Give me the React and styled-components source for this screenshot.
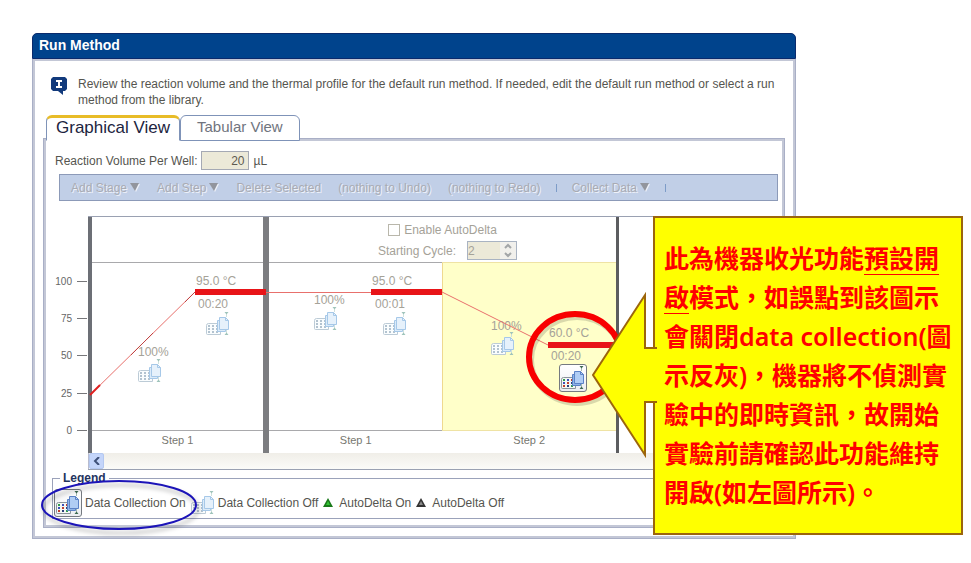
import React, { useState } from 'react';
import styled, { createGlobalStyle, css } from 'styled-components';

const GlobalStyle = createGlobalStyle`
    * {
        box-sizing: border-box;
    }

    body {
        margin: 0;
        background: #fff;
        color: #55554f;
        font-family: "Liberation Sans", Arial, sans-serif;
        font-size: 12px;
        line-height: 16px;
    }

    button, input {
        margin: 0;
        padding: 0;
        font: inherit;
    }
`;

const Page = styled.main`
    position: relative;
    padding: 33px 175px 24px 32px;
`;

const TitleBar = styled.h1`
    height: 26px;
    margin: 0;
    padding: 0 6px;
    border: 1px solid #0a2a6c;
    border-radius: 5px 5px 0 0;
    background: #00438c;
    color: #fff;
    font-size: 14px;
    line-height: 22px;
`;

// double tone frame shared by the window and the tab panel
const frame = css`
    border: 1px solid #a9afc6;
    box-shadow: inset 0 0 0 2px #c3c7d6;
`;

const WindowBody = styled.section`
    ${frame}
    border-top: 0;
    padding: 0 10px 10px;
`;

const Intro = styled.div`
    display: flex;
    gap: 11px;
    padding: 17px 9px 7px 8px;

    p {
        margin: 0;
    }

    svg {
        flex: none;
        margin-top: 1px;
    }
`;

const TabList = styled.div`
    position: relative;
    z-index: 1;
    display: flex;
    margin: 0 0 -3px 3px;
`;

const Tab = styled.button`
    height: 26px;
    padding: 0 ${props => (props.$active ? 9 : 16)}px 2px;
    border: 1px solid #7f93b8;
    border-radius: 6px 6px 0 0;
    background: #fff;
    color: #70747e;
    font-size: 15px;
    line-height: 18px;

    ${props => props.$active && css`
        border-bottom-color: #fff;
        border-top: 3px solid #e8bc28;
        color: #1c2440;
        font-size: 17px;
    `}
`;

const TabPanel = styled.div`
    ${frame}
    padding: 12px 6px 8px 11px;
`;

const VolumeRow = styled.div`
    display: flex;
    align-items: center;
    gap: 3px;
    height: 19px;
    margin-bottom: 4px;

    span {
        margin-left: 2px;
    }
`;

const VolumeInput = styled.input`
    width: 48px;
    height: 19px;
    padding-right: 3px;
    border: 1px solid #a5a9b4;
    background: #ece9d8;
    color: #5d5a50;
    text-align: right;
`;

const Toolbar = styled.div`
    display: flex;
    align-items: center;
    gap: 13px;
    height: 27px;
    margin: 0 0 15px 4px;
    padding: 0 9px;
    border: 1px solid #8c9ab8;
    background: #c1cfe7;
    overflow: hidden;
`;

const ToolButton = styled.button`
    display: flex;
    align-items: center;
    gap: 3px;
    padding: 0 2px;
    border: 0;
    background: none;
    color: #a9abb3;
    text-shadow: 1px 1px 0 #eef2fa;
    white-space: nowrap;
`;

const Divider = styled.span`
    width: 1px;
    height: 8px;
    background: #7d9cc8;
`;

const ChartRow = styled.div`
    display: flex;
`;

const Axis = styled.svg`
    flex: none;
    width: 33px;
    height: 237px;
    font-size: 10px;
    fill: #666;
`;

const ChartFrame = styled.div`
    flex: 1;
    min-width: 0;
    border: 1px solid #9aa1b2;
    border-width: 1px 0 1px 0;
`;

const Plot = styled.div`
    position: relative;
    display: grid;
    grid-template-columns: 175px 353px 1fr;
    overflow: hidden;
`;

const Stage = styled.div`
    display: grid;
    grid-template-rows: 46px 168px 22px;
    border-left: ${props => props.$rule}px solid ${props => props.$tone || '#7c7d80'};
`;

const StageHeader = styled.div`
    display: flex;
    flex-direction: column;
    align-items: center;
    gap: 2px;
    padding-top: 3px;
    border-bottom: 1px solid #a9a9ac;
    color: #a5a298;
`;

const Steps = styled.div`
    display: flex;
    border-bottom: 1px solid #a9a9ac;
`;

const Step = styled.div`
    flex: 1;

    ${props => props.$selected && css`
        border-left: 1px solid #efd98f;
        background: #ffffc9;
        box-shadow: 0 1px 0 #efe3a4, 0 -1px 0 #efe3a4;
    `}
`;

const StepNames = styled.div`
    display: flex;
    color: #77776f;
    font-size: 11px;
    line-height: 18px;
    text-align: center;

    span {
        flex: 1;
    }
`;

const CheckLine = styled.label`
    display: flex;
    align-items: center;
    gap: 4px;
    height: 19px;
`;

const CheckBox = styled.input`
    appearance: none;
    width: 12px;
    height: 12px;
    border: 1px solid #b9b7ab;
    background: #fff;
`;

const CycleLine = styled.div`
    display: flex;
    align-items: center;
    gap: 11px;
    height: 19px;
    padding-left: 10px;
`;

const Spinner = styled.span`
    display: flex;
    width: 50px;
    height: 19px;
    border: 1px solid #a9b3c2;
    background: #f1f0ec;

    input {
        width: 32px;
        border: 0;
        background: #ece9d8;
        color: #a5a298;
    }
`;

const SpinnerButtons = styled.span`
    display: flex;
    flex: 1;
    flex-direction: column;

    button {
        display: flex;
        flex: 1;
        align-items: center;
        justify-content: center;
        border: 0;
        background: none;
    }
`;

// drawn over the stage columns, the ramp lines run across them
const Profile = styled.svg`
    position: absolute;
    top: 0;
    left: 0;
    width: 560px;
    height: 236px;
    fill: #a5a298;
    pointer-events: none;
`;

const CollectButton = styled.button`
    position: absolute;
    left: ${props => props.$x}px;
    top: ${props => props.$y}px;
    display: flex;
    border: 0;
    background: none;
`;

const IconFrame = styled.span`
    display: flex;
    padding: 1px;
    border: 1px solid #757a80;
    border-radius: 3px;
    background: linear-gradient(#fff, #eceef1);
`;

const ScrollBar = styled.div`
    display: flex;
    height: 16px;
    border-left: 1px solid #b9bccf;
    background: linear-gradient(#f0eee8, #fbfbf8);

    button {
        display: flex;
        align-items: center;
        justify-content: center;
        width: 15px;
        border: 1px solid #b4c8f0;
        border-radius: 2px;
        background: #c4d5fa;
    }
`;

const Legend = styled.fieldset`
    position: relative;
    display: flex;
    align-items: center;
    min-width: 0;
    height: 49px;
    margin: 0 0 0 -3px;
    padding: 1px 1px 0;
    border: 1px solid #9ba2ba;

    legend {
        margin-left: 6px;
        padding: 0 3px;
        color: #24345e;
        font-size: 12px;
        font-weight: bold;
    }
`;

const LegendItem = styled.span`
    display: flex;
    align-items: center;
    gap: ${props => props.$gap || 3}px;
    margin-right: 5px;
    white-space: nowrap;
`;

const LegendMark = styled.svg`
    position: absolute;
    left: -14px;
    top: -7px;
    overflow: visible;
    filter: drop-shadow(2px 4px 2px rgba(0, 0, 0, 0.3));
    pointer-events: none;
`;

const Callout = styled.aside`
    position: absolute;
    top: 216px;
    right: 8px;
    width: 310px;
    padding: 21px 9px;
    border: 2px solid #9c650c;
    background: #ff0;
    color: #f00;
    font-family: "Noto Sans", "Noto Sans CJK TC", sans-serif;
    font-size: 25px;
    font-weight: 600;
    line-height: 39px;

    p {
        margin: 0;
    }

    u {
        text-decoration-thickness: 1px;
        text-underline-offset: 6px;
    }
`;

const CalloutArrow = styled.svg`
    position: absolute;
    top: 73px;
    left: -64px;
`;

const CollectIcon = ({ on }) => {
    const line = on ? '#5b82c6' : '#a6c8e8';
    const pad = on ? '#8a949a' : '#bccbd6';
    const dots = on ? ['#2f9a4c', '#3a50b8', '#c0402e', '#2b3f7a'] : ['#b3c3d0'];
    return (
        <svg width="24" height="24" viewBox="0 0 24 24" fill="none">
            <path d="M2.500 11.500h12v11h-13a1 1 0 0 1-1-1v-8a2 2 0 0 1 2-2z" fill={on ? '#f4f7f4' : '#fafdfe'} stroke={pad} />
            {[2, 6, 10].map((x, i) =>
                [13, 16, 19].map((y, j) => (
                    <rect key={`${x}_${y}`} x={x} y={y} width="2" height="2" fill={dots[(i + j) % dots.length]} />
                ))
            )}
            <path d="M11.500 8.500h8v11h-8z" fill={on ? '#8fb4e6' : '#dcebf8'} stroke={line} />
            <path d="M13.500 5.500h6l3 3v9h-9z" fill={on ? '#b0cdf4' : '#e6f1fb'} stroke={line} />
            <path d="M19.500 5.500v3h3" stroke={line} />
            <path d="M20.500 2v3M20.500 18v3" stroke={on ? '#a3bbb1' : '#cfe1dd'} />
            <path d="M18.500 0h4l-2 2.500zM18.500 23h4l-2-2.500z" fill={on ? '#3d6a52' : '#9fc4bb'} />
        </svg>
    );
};

const InfoIcon = () => (
    <svg width="16" height="18" viewBox="0 0 16 18">
        <path d="M2 0h12l2 2v10l-2 2h-2v4l-5-4H2l-2-2V2z" fill="#123a7c" />
        <path d="M5 3h6v2H9v4h2v2H5V9h2V5H5z" fill="#fff" />
    </svg>
);

const DownArrow = () => (
    <svg width="10" height="9" viewBox="0 0 10 9">
        <path d="M1 1h9L6 9z" fill="#eef2fa" />
        <path d="M0 0h9L5 8z" fill="#92959d" />
    </svg>
);

const DeltaIcon = ({ color, edge }) => (
    <svg width="10" height="10" viewBox="0 0 10 10">
        <path d="M5 0l5 9H0z" fill={edge} />
        <path d="M5 3l2 4H3z" fill={color} />
    </svg>
);

const Chevron = ({ d, color = '#a3a6a8' }) => (
    <svg width="8" height="8" viewBox="0 0 8 8" fill="none">
        <path d={d} stroke={color} strokeWidth="2" />
    </svg>
);

const ticks = [
    { value: 100, y: 65 },
    { value: 75, y: 102 },
    { value: 50, y: 139 },
    { value: 25, y: 177 },
    { value: 0, y: 214 },
];

const readings = [
    { x: 108, y: 68, text: '95.0 °C' },
    { x: 110, y: 91, text: '00:20' },
    { x: 50, y: 139, text: '100%' },
    { x: 226, y: 87, text: '100%' },
    { x: 284, y: 68, text: '95.0 °C' },
    { x: 287, y: 91, text: '00:01' },
    { x: 403, y: 113, text: '100%' },
    { x: 461, y: 120, text: '60.0 °C' },
    { x: 463, y: 143, text: '00:20' },
];

const collectPoints = [
    { x: 50, y: 142 },
    { x: 118, y: 95 },
    { x: 226, y: 90 },
    { x: 295, y: 95 },
    { x: 403, y: 115 },
    { x: 471, y: 147, on: true },
];

const Chart = () => (
    <ChartRow>
        <Axis>
            {ticks.map(t => (
                <g key={t.value}>
                    <text x="17" y={t.y + 4} textAnchor="end">{t.value}</text>
                    <path d={`M22 ${t.y + 0.5}h10`} stroke="#77777a" />
                </g>
            ))}
        </Axis>
        <ChartFrame>
            <Plot>
                <Stage $rule={4} $tone="#6c6f76">
                    <StageHeader />
                    <Steps><Step /></Steps>
                    <StepNames><span>Step 1</span></StepNames>
                </Stage>
                <Stage $rule={6}>
                    <StageHeader>
                        <CheckLine>
                            <CheckBox type="checkbox" disabled />
                            Enable AutoDelta
                        </CheckLine>
                        <CycleLine>
                            <label htmlFor="cycle">Starting Cycle:</label>
                            <Spinner>
                                <input id="cycle" defaultValue="2" disabled />
                                <SpinnerButtons>
                                    <button type="button" aria-label="Increase" disabled><Chevron d="M1 6l3-3 3 3" /></button>
                                    <button type="button" aria-label="Decrease" disabled><Chevron d="M1 2l3 3 3-3" /></button>
                                </SpinnerButtons>
                            </Spinner>
                        </CycleLine>
                    </StageHeader>
                    <Steps>
                        <Step />
                        <Step $selected />
                    </Steps>
                    <StepNames><span>Step 1</span><span>Step 2</span></StepNames>
                </Stage>
                <Stage $rule={3} $tone="#5c5d60" />

                <Profile>
                    {readings.map((r, i) => (
                        <text key={i} x={r.x} y={r.y}>{r.text}</text>
                    ))}
                    <path d="M2 178L107 75M178 75.5H283M354 75L460 128" stroke="#e8706c" fill="none" />
                    <path d="M2 178L12 168" stroke="#e02020" strokeWidth="2" fill="none" />
                    <path d="M43 138L65 116M97 85L107 75" stroke="#c04444" fill="none" />
                    <path d="M107 75H178M283 75H354M460 128H530" stroke="#e81418" strokeWidth="6" />
                </Profile>
                {collectPoints.map((p, i) => (
                    <CollectButton key={i} type="button" aria-label="Data collection" $x={p.x} $y={p.y}>
                        {p.on ? <IconFrame><CollectIcon on /></IconFrame> : <CollectIcon />}
                    </CollectButton>
                ))}
                <Profile>
                    <ellipse cx="489" cy="143" rx="46" ry="43" fill="none" stroke="#000" strokeOpacity="0.15" strokeWidth="6" />
                    <ellipse cx="487" cy="140" rx="46" ry="43" fill="none" stroke="#f80000" strokeWidth="6" />
                </Profile>
            </Plot>
            <ScrollBar>
                <button type="button" aria-label="Scroll left"><Chevron d="M6 0L2 4l4 4" color="#3e5078" /></button>
            </ScrollBar>
        </ChartFrame>
    </ChartRow>
);

const tools = [
    { label: 'Add Stage', menu: true },
    { label: 'Add Step', menu: true },
    { label: 'Delete Selected' },
    { label: '(nothing to Undo)' },
    { label: '(nothing to Redo)', divider: true },
    { label: 'Collect Data', menu: true, divider: true },
];

const App = () => {
    const [volume, setVolume] = useState('20');

    return (
        <>
            <GlobalStyle />
            <Page>
                <TitleBar>Run Method</TitleBar>
                <WindowBody>
                    <Intro>
                        <InfoIcon />
                        <p>
                            Review the reaction volume and the thermal profile for the default run method. If needed,
                            edit the default run method or select a run method from the library.
                        </p>
                    </Intro>

                    <TabList role="tablist">
                        <Tab type="button" role="tab" aria-selected="true" $active>Graphical View</Tab>
                        <Tab type="button" role="tab" aria-selected="false">Tabular View</Tab>
                    </TabList>

                    <TabPanel role="tabpanel">
                        <VolumeRow>
                            <label htmlFor="volume">Reaction Volume Per Well:</label>
                            <VolumeInput id="volume" value={volume} onChange={e => setVolume(e.target.value)} />
                            <span>µL</span>
                        </VolumeRow>

                        <Toolbar>
                            {tools.map(tool => (
                                <React.Fragment key={tool.label}>
                                    <ToolButton type="button" disabled>
                                        {tool.label}
                                        {tool.menu && <DownArrow />}
                                    </ToolButton>
                                    {tool.divider && <Divider />}
                                </React.Fragment>
                            ))}
                        </Toolbar>

                        <Chart />

                        <Legend>
                            <legend>Legend</legend>
                            <LegendItem>
                                <IconFrame><CollectIcon on /></IconFrame>
                                Data Collection On
                            </LegendItem>
                            <LegendItem>
                                <CollectIcon />
                                Data Collection Off
                            </LegendItem>
                            <LegendItem $gap={6}>
                                <DeltaIcon color="#35c435" edge="#1a7a1a" />
                                AutoDelta On
                            </LegendItem>
                            <LegendItem $gap={6}>
                                <DeltaIcon color="#8a8a8a" edge="#333" />
                                AutoDelta Off
                            </LegendItem>
                            <LegendMark width="160" height="52">
                                <ellipse cx="80" cy="26" rx="77" ry="24" fill="none" stroke="#1c14b8" strokeWidth="2" />
                            </LegendMark>
                        </Legend>
                    </TabPanel>
                </WindowBody>

                <Callout lang="zh-TW">
                    <CalloutArrow width="68" height="168" viewBox="0 0 68 168">
                        <path d="M66 57H54V4L2 84l52 80v-53h12" fill="#ff0" stroke="#9c650c" strokeWidth="2" />
                    </CalloutArrow>
                    <p>
                        此為機器收光功能<u>預設開啟</u>模式，如誤點到該圖示會關閉data collection(圖示反灰)，機器將不偵測實驗中的即時資訊，故開始實驗前請確認此功能維持開啟(如左圖所示)。
                    </p>
                </Callout>
            </Page>
        </>
    );
};

export default App;
